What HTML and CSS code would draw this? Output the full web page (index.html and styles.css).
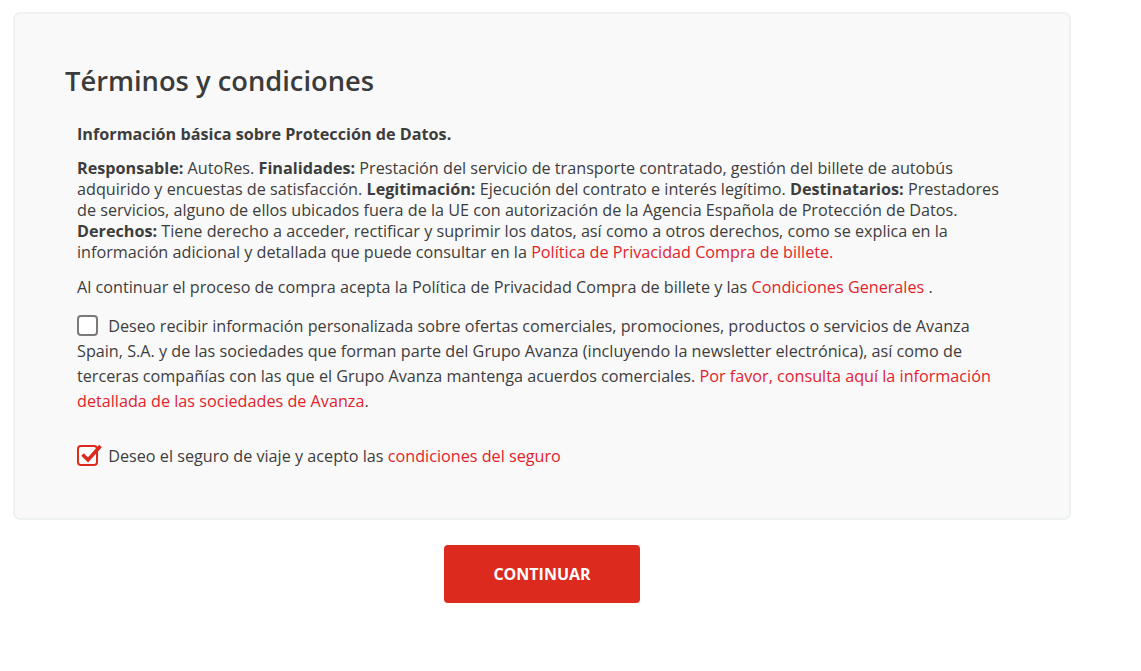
FILE: index.html
```html
<!DOCTYPE html>
<html lang="es">
<head>
<meta charset="utf-8">
<link rel="stylesheet" href="styles.css">
</head>
<body>
<div class="page">
  <section class="card">
    <h2 class="title">Términos y condiciones</h2>
    <div class="content">
      <p class="lead">Información básica sobre Protección de Datos.</p>
      <p class="info"><b>Responsable:</b> AutoRes. <b>Finalidades:</b> Prestación del servicio de transporte contratado, gestión del billete de autobús adquirido y encuestas de satisfacción. <b>Legitimación:</b> Ejecución del contrato e interés legítimo. <b>Destinatarios:</b> Prestadores de servicios, alguno de ellos ubicados fuera de la UE con autorización de la Agencia Española de Protección de Datos. <b>Derechos:</b> Tiene derecho a acceder, rectificar y suprimir los datos, así como a otros derechos, como se explica en la información adicional y detallada que puede consultar en la <a class="link" href="#">Política de Privacidad Compra de billete.</a></p>
      <p class="info">Al continuar el proceso de compra acepta la Política de Privacidad Compra de billete y las <a class="link" href="#">Condiciones Generales </a>.</p>
      <p class="check-text"><span class="box"></span> Deseo recibir información personalizada sobre ofertas comerciales, promociones, productos o servicios de Avanza Spain, S.A. y de las sociedades que forman parte del Grupo Avanza (incluyendo la newsletter electrónica), así como de terceras compañías con las que el Grupo Avanza mantenga acuerdos comerciales. <a class="link" href="#">Por favor, consulta aquí la información detallada de las sociedades de Avanza</a>.</p>
      <p class="check-text insurance"><span class="box checked"><svg viewBox="0 0 26 26" width="26" height="26"><path d="M4.5 12.5 L10 18 L22.5 4" fill="none" stroke="#dc2a1e" stroke-width="3.6" stroke-linecap="butt" stroke-linejoin="miter"/></svg></span> Deseo el seguro de viaje y acepto las <a class="link" href="#">condiciones del seguro</a></p>
    </div>
  </section>
  <div class="actions">
    <button class="btn">CONTINUAR</button>
  </div>
</div>
</body>
</html>
```
FILE: styles.css
```css
* { box-sizing: border-box; }
html, body { margin: 0; background: #fff; }
body {
  font-family: "Open Sans", "Liberation Sans", sans-serif;
  color: #3d3d3d;
}
.page {
  padding: 12px 13px;
  width: 1084px;
}
.card {
  background: #f9f9f9;
  border: 2px solid #eef1f1;
  border-radius: 7px;
  padding: 49px 50px 36px 50px;
  min-height: 508px;
}
.title {
  margin: 0 0 25px 0;
  font-size: 27.3px;
  font-weight: 600;
  line-height: 36px;
  color: #3b3b3b;
}
.content {
  padding: 0 12px;
}
.content p { margin: 0; }
.lead {
  font-size: 16.2px;
  font-weight: 700;
  line-height: 21px;
  margin-bottom: 13px !important;
}
.info {
  font-size: 16.2px;
  line-height: 21px;
  margin-bottom: 14px !important;
}
.info b { font-weight: 700; }
.link { color: #e3232b; text-decoration: none; }
.check-text {
  font-size: 16.2px;
  line-height: 25px;
  margin-top: 16px !important;
}
.check-text.insurance { margin-top: 30px !important; }
.box {
  display: inline-block;
  width: 21px;
  height: 21px;
  border: 2px solid #7a7a7a;
  border-radius: 4px;
  vertical-align: -4px;
  margin-right: 6px;
  background: #fff;
  position: relative;
}
.box.checked {
  border-color: #dc2a1e;
}
.box.checked svg {
  position: absolute;
  left: -1px;
  top: -5px;
}
.actions {
  display: flex;
  justify-content: center;
  padding-top: 25px;
}
.btn {
  width: 196px;
  height: 58px;
  background: #dc2a1e;
  color: #fff;
  border: none;
  border-radius: 4px;
  font-family: "Open Sans", "Liberation Sans", sans-serif;
  font-weight: 700;
  font-size: 16px;
}
```
